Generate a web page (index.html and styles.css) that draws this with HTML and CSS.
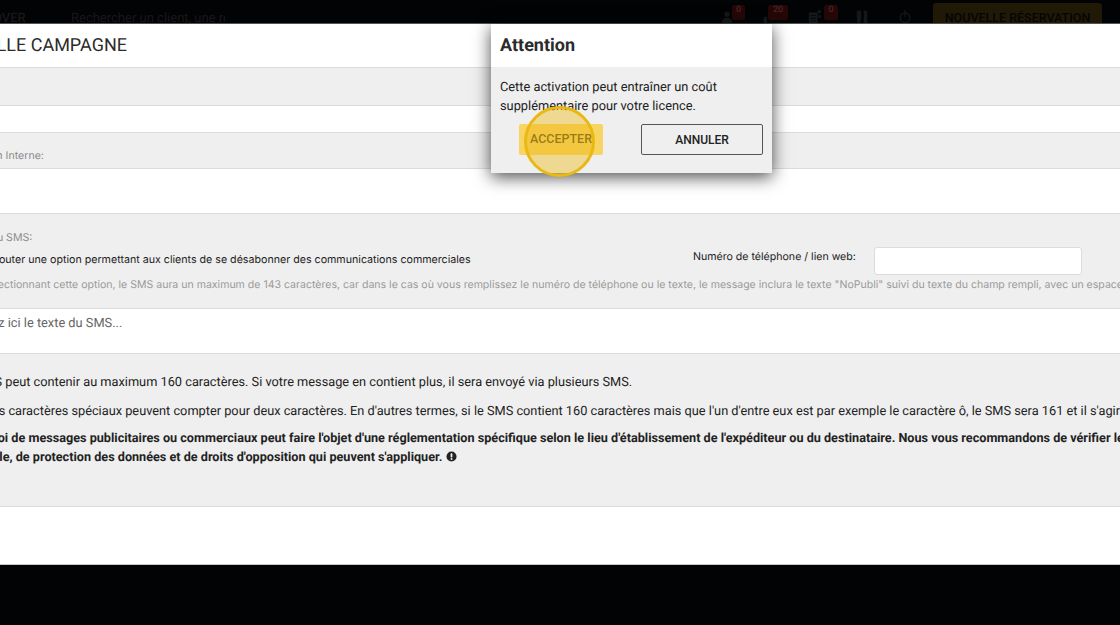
FILE: index.html
```html
<!DOCTYPE html>
<html lang="fr">
<head>
<meta charset="utf-8">
<title>Nouvelle campagne</title>
<link rel="stylesheet" href="styles.css">
</head>
<body>
<header class="topbar">
  <span class="brand">OVER</span>
  <span class="search">Rechercher un client, une ré</span>
  <div class="tools">
    <span class="tool tool-a">
      <svg class="ico" viewBox="0 0 16 16"><circle cx="8" cy="6" r="3"/><path d="M2 16c0-4 3-6 6-6s6 2 6 6z"/></svg>
      <b class="badge">0</b>
    </span>
    <span class="tool tool-b">
      <svg class="ico" viewBox="0 0 16 16"><path d="M3 16V9h4v7z"/></svg>
      <b class="badge">20</b>
    </span>
    <span class="tool tool-c">
      <svg class="ico" viewBox="0 0 16 16"><path d="M1 4h10v12H1zM3 7v1h6V7zm0 3v1h6v-1zm0 3v1h6v-1zM13 1a2 2 0 1 1 0 4 2 2 0 0 1 0-4zm-1 6h3v3h-3z"/></svg>
      <b class="badge">0</b>
    </span>
    <span class="tool tool-d">
      <svg class="ico" viewBox="0 0 16 16"><path d="M2 2h5v7l-1 7H3L2 9zM10 2h4v14h-4z"/></svg>
    </span>
    <span class="tool tool-e">
      <svg class="ico ico-line" viewBox="0 0 16 16"><circle cx="8" cy="10" r="5.5"/><path d="M8 1v8"/></svg>
    </span>
  </div>
  <span class="cta">NOUVELLE RÉSERVATION</span>
</header>

<main class="sheet">
  <section class="row head">
    <h1 class="title">NOUVELLE CAMPAGNE</h1>
  </section>
  <section class="row band band-one"></section>
  <section class="row blank blank-one"></section>
  <section class="row band band-two">
    <span class="hint hint-name">Nom Interne:</span>
  </section>
  <section class="row blank blank-two"></section>
  <section class="row band options">
    <span class="hint hint-sms">Contenu du SMS:</span>
    <div class="opt-line">
      <label class="opt-label">Ajouter une option permettant aux clients de se désabonner des communications commerciales</label>
      <label class="phone-label">Numéro de téléphone / lien web:</label>
      <span class="phone-input"></span>
    </div>
    <p class="note">En sélectionnant cette option, le SMS aura un maximum de 143 caractères, car dans le cas où vous remplissez le numéro de téléphone ou le texte, le message inclura le texte "NoPubli" suivi du texte du champ rempli, avec un espace</p>
  </section>
  <section class="row blank compose">
    <span class="placeholder">Écrivez ici le texte du SMS...</span>
  </section>
  <section class="row band info">
    <p class="para para-a">Le SMS peut contenir au maximum 160 caractères. Si votre message en contient plus, il sera envoyé via plusieurs SMS.</p>
    <p class="para para-b">Les caractères spéciaux peuvent compter pour deux caractères. En d'autres termes, si le SMS contient 160 caractères mais que l'un d'entre eux est par exemple le caractère ô, le SMS sera 161 et il s'agira</p>
    <p class="para para-c">L'envoi de messages publicitaires ou commerciaux peut faire l'objet d'une réglementation spécifique selon le lieu d'établissement de l'expéditeur ou du destinataire. Nous vous recommandons de vérifier les<br>sociale, de protection des données et de droits d'opposition qui peuvent s'appliquer. <svg class="warn" viewBox="0 0 12 12"><circle cx="6" cy="6" r="5.5"/><rect class="warn-mark" x="5" y="2.4" width="2" height="4.6" rx="0.8"/><circle class="warn-mark" cx="6" cy="8.8" r="1.1"/></svg></p>
  </section>
  <section class="row blank foot"></section>
</main>

<div class="dialog">
  <div class="dialog-head"><h2 class="dialog-title">Attention</h2></div>
  <div class="dialog-body">
    <p class="dialog-text">Cette activation peut entraîner un coût supplémentaire pour votre licence.</p>
    <div class="dialog-actions">
      <button class="btn btn-yes">ACCEPTER</button>
      <button class="btn btn-no">ANNULER</button>
    </div>
  </div>
</div>
<div class="spot"></div>
</body>
</html>
```
FILE: styles.css
```css
* { box-sizing: border-box; }
html, body { margin: 0; height: 625px; overflow: hidden; }
body { background: #020305; font-family: Roboto, "Liberation Sans", sans-serif; color: #222; position: relative; text-rendering: geometricPrecision; }

.topbar { height: 24px; background: #020305; display: flex; align-items: flex-start; overflow: hidden; white-space: nowrap; border-bottom: 1px solid #555; }
.brand { margin: 11px 0 0 -7px; width: 78px; font-size: 13px; font-weight: 500; line-height: 16px; color: #17181a; }
.search { margin-top: 11px; width: 154px; font-size: 13px; line-height: 16px; color: #17181a; overflow: hidden; }
.tools { display: flex; margin-left: 495px; }
.tool { position: relative; display: block; height: 23px; }
.tool-a { width: 41px; }
.tool-b { width: 47px; }
.tool-c { width: 47px; }
.tool-d { width: 43px; }
.tool-e { width: 35px; }
.ico { position: absolute; left: 0; top: 9px; width: 14px; height: 14px; fill: #15181a; }
.ico-line { fill: none; stroke: #15181a; stroke-width: 1.5; }
.badge { position: absolute; top: 5px; height: 15px; border-radius: 2px; background: #260708; color: #4a2525; font: 500 9px/11px Roboto, sans-serif; text-align: center; }
.tool-a .badge { left: 12px; width: 13px; }
.tool-b .badge { left: 7px; width: 20px; }
.tool-c .badge { left: 16px; width: 14px; }
.cta { margin: 3px 0 0 0; width: 169px; height: 24px; border-radius: 3px; background: #201906; color: #050505; font-size: 12.5px; font-weight: 500; line-height: 32px; text-align: center; }

.sheet { height: 541px; background: #fff; overflow: hidden; }
.row { border-bottom: 1px solid #dcdcdc; }
.band { background: #efefef; }
.blank { background: #fff; }
.head { height: 44px; padding-bottom: 1px; display: flex; align-items: center; }
.title { margin: 0 0 0 -62px; font-size: 18px; font-weight: 400; color: #2b2b2b; white-space: nowrap; }
.band-one { height: 38px; }
.blank-one { height: 27px; }
.band-two { height: 36px; padding-top: 16px; }
.blank-two { height: 45px; }
.hint { display: block; font-family: Inter, Roboto, sans-serif; font-size: 10.6px; line-height: 14px; color: #8a8a8a; white-space: nowrap; }
.hint-name { margin-left: -21px; }
.options { height: 95px; padding-top: 17px; white-space: nowrap; }
.hint-sms { margin-left: -55px; }
.opt-line { display: flex; align-items: flex-start; height: 28px; margin-top: 2px; }
.opt-label { width: 682px; margin-top: 6px; margin-left: -11px; font-family: Inter, Roboto, sans-serif; font-size: 10.67px; line-height: 14px; color: #222; flex: none; }
.phone-label { width: 181px; flex: none; margin-left: 22px; margin-top: 3px; font-family: Inter, Roboto, sans-serif; font-size: 10.6px; line-height: 14px; color: #222; }
.phone-input { width: 208px; height: 28px; flex: none; background: #fff; border: 1px solid #dcdcdc; border-radius: 3px; }
.note { margin: 3px 0 0 -32px; font-family: Inter, Roboto, sans-serif; font-size: 10.55px; line-height: 14px; color: #9a9a9a; }
.compose { height: 45px; padding-top: 7px; }
.placeholder { display: block; margin-left: -36px; font-size: 12.8px; line-height: 16px; color: #666; white-space: nowrap; }
.info { height: 153px; padding-top: 20px; white-space: nowrap; }
.para { margin: 0; font-size: 12.78px; color: #222; line-height: 18.5px; }
.para-a { margin-left: -41px; }
.para-b { margin: 10px 0 0 -15px; }
.para-c { margin: 9px 0 0 -31px; font-size: 12.65px; font-weight: 700; }
.warn { width: 11px; height: 11px; vertical-align: -1px; fill: #222; }
.warn .warn-mark { fill: #efefef; }
.foot { height: 58px; border-bottom-color: #c8c8c8; }

.dialog { position: absolute; left: 491px; top: 24px; width: 281px; height: 149px; background: #efefef; box-shadow: 0 4px 16px rgba(0, 0, 0, .7); }
.dialog-head { height: 43px; background: #fff; padding: 0 9px; display: flex; align-items: center; }
.dialog-title { margin: 0; font-size: 18px; font-weight: 700; color: #2b2b2b; }
.dialog-body { padding: 12px 9px 0; }
.dialog-text { margin: 0; height: 38px; font-size: 12.8px; line-height: 18.5px; color: #222; }
.dialog-actions { display: flex; margin-top: 7px; }
.btn { height: 31px; border-radius: 2px; font: 500 12.5px/1 Roboto, sans-serif; padding: 0; }
.btn-yes { width: 84px; margin-left: 19px; border: 0; background: #f8d563; color: #5e5020; }
.btn-no { width: 122px; margin-left: 38px; border: 1px solid #555; background: #efefef; color: #222; font-size: 12px; }
.spot { position: absolute; left: 524px; top: 106px; width: 71px; height: 71px; border-radius: 50%; border: 3px solid #e9b913; background: rgba(236, 184, 16, .42); }
```
